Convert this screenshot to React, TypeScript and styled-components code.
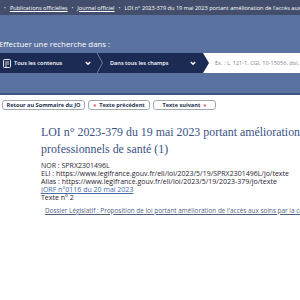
import React from 'react'
import styled, { createGlobalStyle } from 'styled-components'

const GlobalStyle = createGlobalStyle`
  html, body {
    margin: 0;
    padding: 0;
    background: #ffffff;
    font-family: "Open Sans", "Noto Sans", sans-serif;
    overflow: hidden;
  }
`

const Page = styled.div`
  width: 300px;
  height: 300px;
  overflow: hidden;
  background: #ffffff;
`

const Breadcrumb = styled.div`
  height: 15px;
  background: #424e6b;
  display: flex;
  align-items: center;
  gap: 4px;
  white-space: nowrap;
  overflow: hidden;
  font-size: 5.6px;
  color: #ffffff;
`

const Crumb = styled.span<{ $link?: boolean }>`
  text-decoration: ${(p) => (p.$link ? 'underline' : 'none')};
`

const Dot = styled.span`
  font-size: 5px;
  opacity: 0.8;
`

const SearchSection = styled.div`
  background: #5a72a0;
  height: 80px;
  padding-top: 24px;
  box-sizing: border-box;
  border-bottom: 2px solid #3f5686;
`

const SearchTitle = styled.div`
  color: #ffffff;
  font-size: 7.8px;
  line-height: 11px;
  margin-left: -1px;
`

const SearchBar = styled.div`
  display: flex;
  height: 20px;
  margin-top: 3px;
`

const Segment = styled.div<{ $w: number }>`
  position: relative;
  flex: 0 0 ${(p) => p.$w}px;
  background: #1c2b54;
  display: flex;
  align-items: center;
  gap: 3px;
  padding-left: ${(p) => (p.$w > 100 ? 13 : 3)}px;
  box-sizing: border-box;
  color: #ffffff;
  font-size: 5.6px;
  font-weight: 600;
`

const Chevron = styled.svg<{ $right: number }>`
  position: absolute;
  right: ${(p) => p.$right}px;
  top: 8px;
`

const Separator = styled.svg`
  position: absolute;
  right: -6px;
  top: 0;
  z-index: 2;
`

const Input = styled.div`
  flex: 1;
  background: #ffffff;
  display: flex;
  align-items: center;
  padding-left: 12px;
  color: #80848d;
  font-size: 5.6px;
  white-space: nowrap;
  overflow: hidden;
`

const Toolbar = styled.div`
  display: flex;
  gap: 3px;
  padding: 5px 0 0 2px;
`

const NavButton = styled.div<{ $w: number }>`
  width: ${(p) => p.$w}px;
  height: 10px;
  box-sizing: border-box;
  border: 1px solid #a3a9b4;
  border-radius: 3px;
  background: #ffffff;
  display: flex;
  align-items: center;
  justify-content: center;
  gap: 3px;
  font-size: 5.6px;
  font-weight: 700;
  color: #26324f;
  white-space: nowrap;
`

const Arrow = styled.span`
  color: #d22d3f;
  font-size: 5px;
`

const Content = styled.div`
  padding-left: 41px;
  padding-top: 14px;
`

const Title = styled.h1`
  margin: 0;
  font-family: "Liberation Serif", "DejaVu Serif", serif;
  font-weight: 400;
  font-size: 11.9px;
  line-height: 17px;
  color: #3a5283;
  white-space: nowrap;
`

const Meta = styled.div`
  margin-top: 4px;
  font-size: 7px;
  line-height: 8px;
  color: #1f2430;
  white-space: nowrap;
`

const MetaLink = styled.div`
  color: #4a6aa8;
  text-decoration: underline;
`

const Dossier = styled.div`
  margin: 5px 0 0 4px;
  font-size: 6.4px;
  line-height: 8px;
  color: #4f5f80;
  text-decoration: underline;
  white-space: nowrap;
`

function ChevronIcon({ right }: { right: number }) {
  return (
    <Chevron $right={right} width="6" height="5" viewBox="0 0 6 5">
      <path d="M0.8 1 L3 3.3 L5.2 1" fill="none" stroke="#fff" strokeWidth="1.3" />
    </Chevron>
  )
}

function App() {
  return (
    <Page>
      <GlobalStyle />
      <Breadcrumb>
        <svg width="4" height="6" viewBox="0 0 4 6">
          <path d="M0 3 L2 1 L4 3 L4 6 L0 6 Z" fill="#fff" />
        </svg>
        <Dot>•</Dot>
        <Crumb $link>Publications officielles</Crumb>
        <Dot>•</Dot>
        <Crumb $link>Journal officiel</Crumb>
        <Dot>•</Dot>
        <Crumb>LOI n° 2023-379 du 19 mai 2023 portant amélioration de l'accès aux soins</Crumb>
      </Breadcrumb>
      <SearchSection>
        <SearchTitle>Effectuer une recherche dans :</SearchTitle>
        <SearchBar>
          <Segment $w={97}>
            <svg width="8" height="9" viewBox="0 0 8 9">
              <rect x="0.5" y="0.5" width="7" height="8" rx="1" fill="none" stroke="#fff" strokeWidth="0.9" />
              <path d="M2 3 H6 M2 5 H6 M2 7 H4" stroke="#fff" strokeWidth="0.8" />
            </svg>
            Tous les contenus
            <ChevronIcon right={6} />
            <Separator width="6" height="20" viewBox="0 0 6 20">
              <path d="M0 0 L6 10 L0 20 Z" fill="#1c2b54" />
              <path d="M0 0 L5.5 10 L0 20" fill="none" stroke="#8093bd" strokeWidth="0.8" />
            </Separator>
          </Segment>
          <Segment $w={106}>
            Dans tous les champs
            <ChevronIcon right={7} />
            <Separator width="6" height="20" viewBox="0 0 6 20">
              <path d="M0 0 L6 10 L0 20 Z" fill="#1c2b54" />
            </Separator>
          </Segment>
          <Input>Ex. : L. 121-1, CGI, 10-15056, dol, rupture du contrat</Input>
        </SearchBar>
      </SearchSection>
      <Toolbar>
        <NavButton $w={83}>Retour au Sommaire du JO</NavButton>
        <NavButton $w={62}>
          <Arrow>«</Arrow>Texte précédent
        </NavButton>
        <NavButton $w={63}>
          Texte suivant<Arrow>»</Arrow>
        </NavButton>
      </Toolbar>
      <Content>
        <Title>
          LOI n° 2023-379 du 19 mai 2023 portant amélioration de l'accès aux soins par la confiance aux
          <br />
          professionnels de santé (1)
        </Title>
        <Meta>
          <div>NOR : SPRX2301496L</div>
          <div>ELI : https://www.legifrance.gouv.fr/eli/loi/2023/5/19/SPRX2301496L/jo/texte</div>
          <div>Alias : https://www.legifrance.gouv.fr/eli/loi/2023/5/19/2023-379/jo/texte</div>
          <MetaLink>JORF n°0116 du 20 mai 2023</MetaLink>
          <div>Texte n° 2</div>
        </Meta>
        <Dossier>
          Dossier Législatif : Proposition de loi portant amélioration de l'accès aux soins par la confiance aux professionnels de santé
        </Dossier>
      </Content>
    </Page>
  )
}

export default App
